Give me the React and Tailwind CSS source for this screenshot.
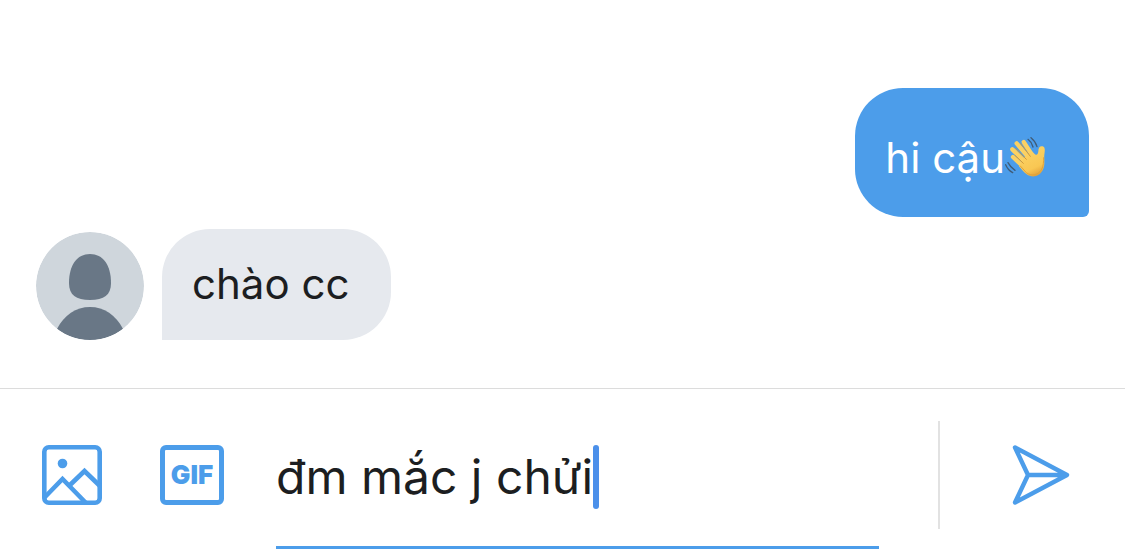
import React, { useState } from 'react';

function WavingHand() {
    return (
        <svg viewBox="0 0 126 129" className="inline-block w-[42px] h-[43px] align-[-7px]" role="img" aria-label="waving hand">
            <defs>
                <linearGradient id="skin" x1="0.2" y1="0" x2="0.6" y2="1">
                    <stop offset="0" stopColor="#fcd568" />
                    <stop offset="0.75" stopColor="#f9c753" />
                    <stop offset="1" stopColor="#e3a23a" />
                </linearGradient>
            </defs>
            {/* fingers */}
            <g fill="none" stroke="#fbd163" strokeWidth="13" strokeLinecap="round">
                <path d="M24 60 L64 98" />
                <path d="M22 37 L68 82" />
                <path d="M35 19 L78 70" />
                <path d="M56 15 L84 58" />
            </g>
            {/* palm and thumb */}
            <path
                d="M52 72 L58 60 L70 52 L82 44 L90 52 C96 56 99 52 100 43 C100 32 105 26 113 28 C121 30 120 42 118 53 C116 67 122 82 113 100 C104 118 82 124 65 112 C56 106 49 96 42 88 Z"
                fill="url(#skin)"
            />
            <path d="M30 55 L55 79 M32 34 L64 67 M47 20 L76 58" fill="none" stroke="#cf9a3c" strokeWidth="3" strokeLinecap="round" />
            <path d="M46 87 L64 107 C80 119 99 114 109 99 C116 87 116 72 116 62" fill="none" stroke="#e0a23a" strokeWidth="3" strokeLinecap="round" />
            {/* motion lines */}
            <path d="M69 7 Q80 15 84 30 M78 2 Q91 12 96 29 M2 83 Q8 98 23 107 M9 77 Q16 91 30 100" fill="none" stroke="#405c78" strokeWidth="4" strokeLinecap="round" />
        </svg>
    );
}

function Avatar() {
    return (
        <svg viewBox="0 0 108 108" className="w-[108px] h-[108px] shrink-0 rounded-full" aria-hidden="true">
            <circle cx="54" cy="54" r="54" fill="#cfd6dc" />
            <path d="M54 22 C67 22 75 33 75 51 C75 63 68 68 54 68 C40 68 33 63 33 51 C33 33 41 22 54 22 Z" fill="#697786" />
            <path d="M21 97 C28 83 40 75 54 75 C68 75 80 83 87 97 A54 54 0 0 1 21 97 Z" fill="#697786" />
        </svg>
    );
}

function ImageIcon() {
    return (
        <svg viewBox="0 0 60 60" className="w-[60px] h-[60px]" fill="none" stroke="currentColor" strokeWidth="4.6">
            <rect x="2.3" y="2.3" width="55.4" height="55.4" rx="4.5" />
            <circle cx="20.5" cy="18.5" r="4.8" fill="currentColor" stroke="none" />
            <path d="M2 53 L20.5 34 L44 58 M28 40 L42.5 26 L58 41" />
        </svg>
    );
}

function SendIcon() {
    return (
        <svg viewBox="0 0 58 60" className="w-[58px] h-[60px]" fill="none" stroke="currentColor" strokeWidth="4.4" strokeLinejoin="round" strokeLinecap="round">
            <path d="M3 2.5 L55 30 L3 57.5 L16 30 Z M16 30 H54" />
        </svg>
    );
}

export default function App() {
    const [draft, setDraft] = useState('đm mắc j chửi');

    return (
        <div className="min-h-screen bg-white font-['Inter','Noto_Sans',sans-serif] text-[#1c1e21]">
            <main className="flex flex-col gap-3 px-9 pt-[88px] pb-12">
                <div className="self-end rounded-[48px] rounded-br-md bg-[#4c9dea] pt-10 pb-[29px] pl-[30px] pr-[42px] text-[42px] leading-[60px] text-white">
                    hi cậu<WavingHand />
                </div>
                <div className="flex items-end gap-[18px]">
                    <Avatar />
                    <div className="rounded-[48px] rounded-bl-none bg-[#e6e9ee] pt-[25px] pb-[26px] pl-[30px] pr-[42px] text-[42px] leading-[60px]">
                        chào cc
                    </div>
                </div>
            </main>

            <form className="flex items-start border-t border-[#dcdcdc] pt-8 pl-[42px] pr-[55px] text-[#4c9dea]" onSubmit={(e) => e.preventDefault()}>
                <button type="button" aria-label="Add photo" className="mt-6 shrink-0">
                    <ImageIcon />
                </button>
                <button
                    type="button"
                    className="mt-6 ml-[58px] flex h-[60px] w-16 shrink-0 items-center justify-center rounded-md border-[5px] border-current text-[26px] leading-[30px] font-black"
                >
                    GIF
                </button>
                <label className="mt-6 ml-[52px] flex min-w-0 flex-1 items-start border-b-3 border-current pb-[37px]">
                    <input
                        type="text"
                        aria-label="Message"
                        value={draft}
                        onChange={(e) => setDraft(e.target.value)}
                        className="h-16 min-w-0 [field-sizing:content] text-[48px] leading-[64px] text-[#1c1e21] caret-transparent outline-none"
                    />
                    <span className="h-16 w-[6px] shrink-0 rounded-full bg-[#4b90ea]" />
                </label>
                <div className="ml-[59px] h-[108px] w-[2px] shrink-0 bg-[#e2e2e2]" />
                <button type="submit" aria-label="Send" className="mt-6 ml-[72px] shrink-0">
                    <SendIcon />
                </button>
            </form>
        </div>
    );
}
